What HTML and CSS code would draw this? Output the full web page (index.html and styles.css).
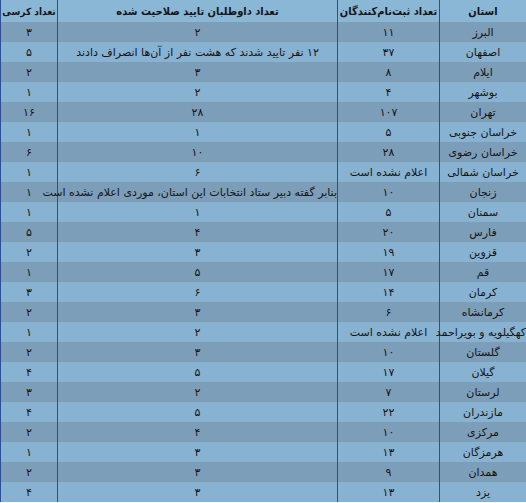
FILE: index.html
```html
<!DOCTYPE html>
<html lang="fa" dir="rtl">
<head>
<meta charset="utf-8">
<title>آمار داوطلبان</title>
<link rel="stylesheet" href="styles.css">
</head>
<body>
<table class="stats">
  <colgroup>
    <col class="c-prov">
    <col class="c-reg">
    <col class="c-ok">
    <col class="c-seat">
  </colgroup>
  <thead>
    <tr>
      <th>استان</th>
      <th>تعداد ثبت‌نام‌کنندگان</th>
      <th>تعداد داوطلبان تایید صلاحیت شده</th>
      <th class="th-seat">تعداد کرسی</th>
    </tr>
  </thead>
  <tbody>
    <tr><td>البرز</td><td>۱۱</td><td>۲</td><td>۳</td></tr>
    <tr><td>اصفهان</td><td>۳۷</td><td>۱۲ نفر تایید شدند که هشت نفر از آن‌ها انصراف دادند</td><td>۵</td></tr>
    <tr><td>ایلام</td><td>۸</td><td>۳</td><td>۲</td></tr>
    <tr><td>بوشهر</td><td>۴</td><td>۲</td><td>۱</td></tr>
    <tr><td>تهران</td><td>۱۰۷</td><td>۲۸</td><td>۱۶</td></tr>
    <tr><td>خراسان جنوبی</td><td>۵</td><td>۱</td><td>۱</td></tr>
    <tr><td>خراسان رضوی</td><td>۲۸</td><td>۱۰</td><td>۶</td></tr>
    <tr><td>خراسان شمالی</td><td>اعلام نشده است</td><td>۶</td><td>۱</td></tr>
    <tr><td>زنجان</td><td>۱۰</td><td>بنابر گفته دبیر ستاد انتخابات این استان، موردی اعلام نشده است</td><td>۱</td></tr>
    <tr><td>سمنان</td><td>۵</td><td>۱</td><td>۱</td></tr>
    <tr><td>فارس</td><td>۲۰</td><td>۴</td><td>۵</td></tr>
    <tr><td>قزوین</td><td>۱۹</td><td>۳</td><td>۲</td></tr>
    <tr><td>قم</td><td>۱۷</td><td>۵</td><td>۱</td></tr>
    <tr><td>کرمان</td><td>۱۴</td><td>۶</td><td>۳</td></tr>
    <tr><td>کرمانشاه</td><td>۶</td><td>۳</td><td>۲</td></tr>
    <tr><td>کهگیلویه و بویراحمد</td><td>اعلام نشده است</td><td>۲</td><td>۱</td></tr>
    <tr><td>گلستان</td><td>۱۰</td><td>۳</td><td>۲</td></tr>
    <tr><td>گیلان</td><td>۱۷</td><td>۵</td><td>۴</td></tr>
    <tr><td>لرستان</td><td>۷</td><td>۲</td><td>۳</td></tr>
    <tr><td>مازندران</td><td>۲۲</td><td>۵</td><td>۴</td></tr>
    <tr><td>مرکزی</td><td>۱۰</td><td>۴</td><td>۲</td></tr>
    <tr><td>هرمزگان</td><td>۱۳</td><td>۳</td><td>۱</td></tr>
    <tr><td>همدان</td><td>۹</td><td>۳</td><td>۲</td></tr>
    <tr><td>یزد</td><td>۱۳</td><td>۳</td><td>۴</td></tr>
  </tbody>
</table>
</body>
</html>
```

FILE: styles.css
```css
html, body {
  margin: 0;
  padding: 0;
  background: #ffffff;
}

.stats {
  direction: rtl;
  width: 526px;
  table-layout: fixed;
  border-collapse: separate;
  border-spacing: 0;
  font-family: "DejaVu Sans", "Noto Sans", sans-serif;
  color: #151515;
}

.c-prov { width: 87px; }
.c-reg { width: 102px; }
.c-ok { width: 280px; }
.c-seat { width: 57px; }

.stats th,
.stats td {
  padding: 0;
  text-align: center;
  white-space: nowrap;
  border-left: 1px solid #2a4f92;
  overflow: visible;
}

.stats th {
  height: 22px;
  font-family: "DejaVu Sans Condensed", "DejaVu Sans", sans-serif;
  font-stretch: condensed;
  font-size: 11px;
  font-weight: bold;
  background: #8bb7d7;
}

.stats th.th-seat {
  font-size: 10px;
}

.stats td {
  height: 20px;
  font-size: 11px;
  background: #87b2d1;
}

.stats tbody tr:nth-child(odd) td {
  background: #7c9eb9;
}
```
